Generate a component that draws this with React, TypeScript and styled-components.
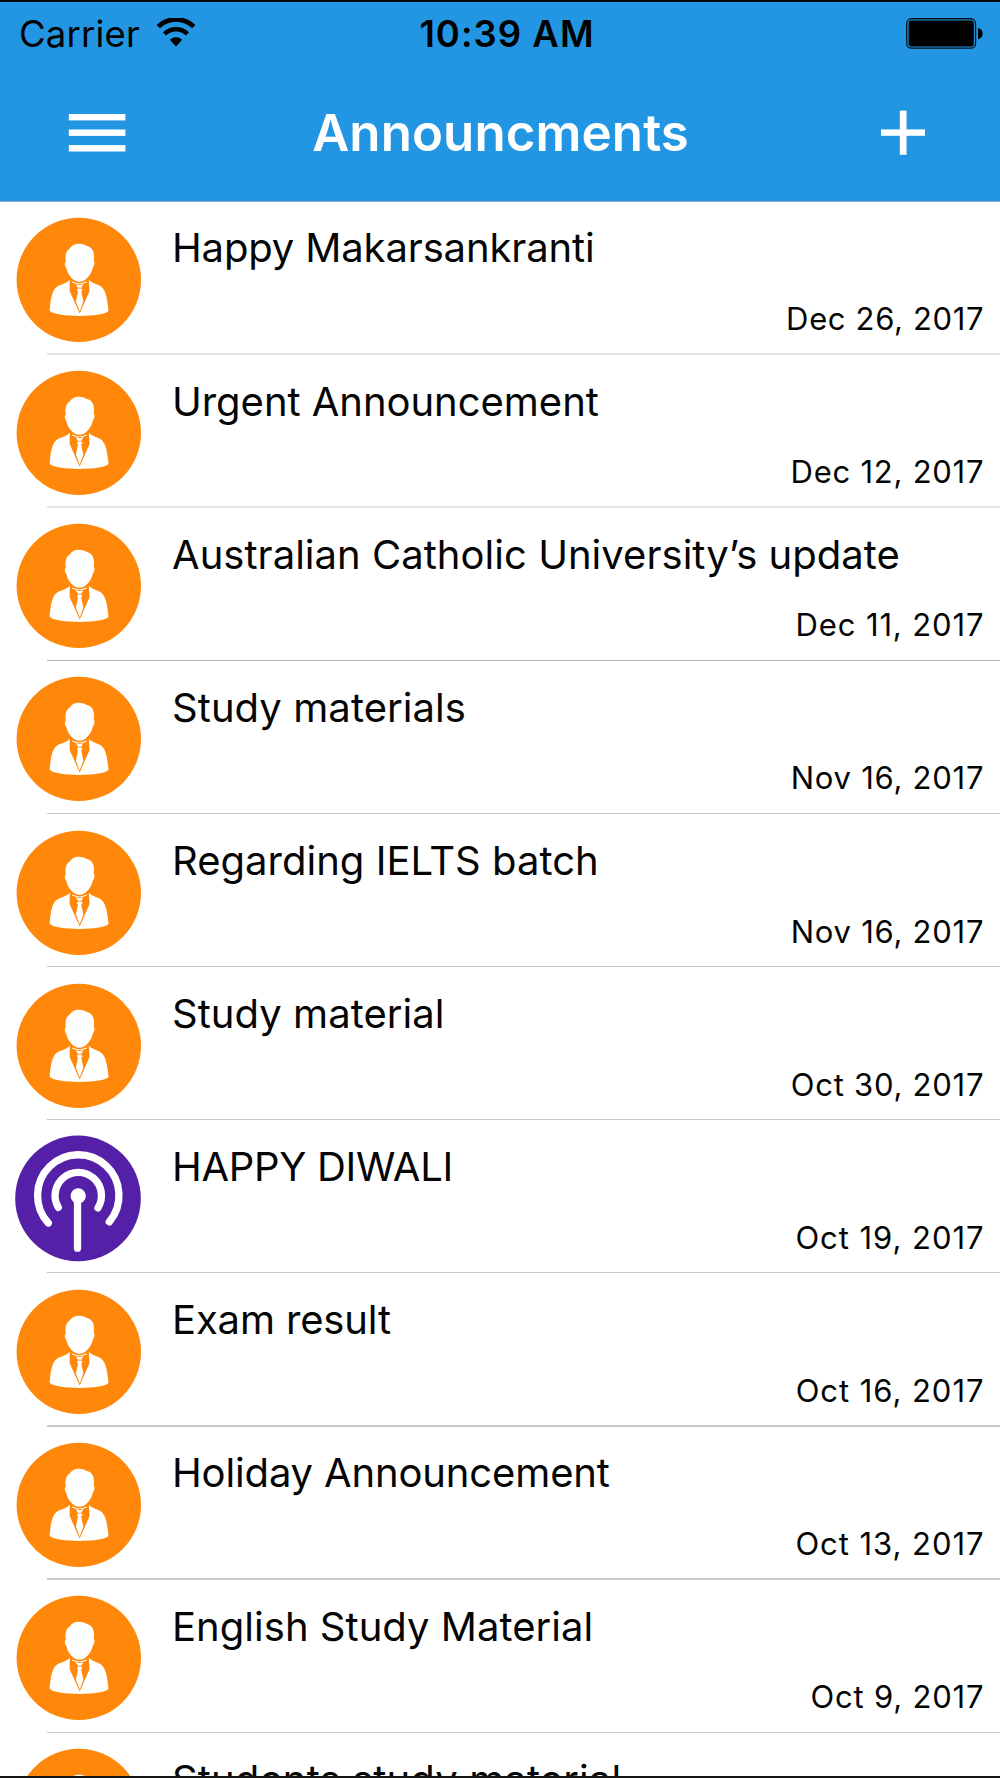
import React from 'react';
import styled, { createGlobalStyle } from 'styled-components';

const Global = createGlobalStyle`
  * { box-sizing: border-box; }
  html, body { margin: 0; padding: 0; background: #fff; }
`;

const Screen = styled.main`
  width: 1000px;
  height: 1778px;
  display: flex;
  flex-direction: column;
  overflow: hidden;
  background: #fff;
  border-top: 2px solid #00060c;
  border-bottom: 2px solid #161616;
  font-family: Inter, 'Liberation Sans', sans-serif;
  color: #050505;
`;

const Header = styled.header`
  flex: none;
  height: 200px;
  background: #2396e3;
  border-bottom: 1px solid #8da5b5;
`;

const StatusBar = styled.div`
  display: grid;
  grid-template-columns: 1fr auto 1fr;
  align-items: center;
  height: 64px;
  padding: 0 17px 0 19px;
  color: #000;
`;

const Carrier = styled.div`
  display: flex;
  align-items: center;
  gap: 16px;
`;

const StatusText = styled.div`
  padding-top: 2px;
`;

const Clock = styled(StatusText)`
  margin-left: 11px;
`;

const WifiBox = styled.div`
  display: flex;
  padding-bottom: 2px;
`;

const BatteryBox = styled.div`
  display: flex;
  justify-content: flex-end;
`;

const NavBar = styled.nav`
  display: grid;
  grid-template-columns: 1fr auto 1fr;
  align-items: center;
  height: 134px;
  padding: 0 74px 0 68px;
`;

const NavButton = styled.button<{ $end?: boolean }>`
  display: flex;
  padding: 0;
  border: 0;
  background: none;
  justify-self: ${p => (p.$end ? 'end' : 'start')};
`;

const NavTitle = styled.h1`
  margin: 0 0 0 7px;
  color: #fff;
`;

const Label = styled.span<{ $size: number; $track?: number; $weight?: number }>`
  display: block;
  font-size: ${p => p.$size}px;
  font-weight: ${p => p.$weight ?? 400};
  letter-spacing: ${p => p.$track ?? 0}px;
  margin-right: ${p => -(p.$track ?? 0)}px;
  line-height: 1.2;
  white-space: nowrap;
`;

const List = styled.ul`
  list-style: none;
  margin: -0.5px 0 0;
  padding: 0;
`;

const Item = styled.li`
  display: flex;
  flex-direction: column;
  height: 153.14px;
`;

const Body = styled.div`
  flex: 1;
  display: flex;
  gap: 30px;
  padding: 14.6px 16.5px 0 15px;
`;

const Details = styled.div`
  flex: 1;
  display: flex;
  flex-direction: column;
  padding-top: 8.3px;
`;

const DateLine = styled.div`
  display: flex;
  justify-content: flex-end;
  margin-top: 27.7px;
`;

const Separator = styled.hr<{ $height: number; $color: string }>`
  flex: none;
  height: ${p => p.$height}px;
  width: 953px;
  margin: 0 0 0 47px;
  border: 0;
  background: ${p => p.$color};
`;

const Wifi = () => (
  <svg width="40" height="30" viewBox="0 0 40 30">
    <g fill="none" stroke="#000" strokeWidth="4.6">
      <path d="M2.3 8.6 A25.5 25.5 0 0 1 37.7 8.6" />
      <path d="M8.5 15.9 A16.5 16.5 0 0 1 31.5 15.9" />
    </g>
    <path d="M13.8 21.7 Q20 17 26.2 21.7 L20 28.4Z" />
  </svg>
);

const Battery = () => (
  <svg width="77" height="32" viewBox="0 0 77 32">
    <rect x="0.75" y="0.75" width="68.8" height="29.4" rx="4.6" fill="none" stroke="#06121c" strokeWidth="1.3" />
    <rect x="2.6" y="2.6" width="65.2" height="25.8" rx="2.6" />
    <path d="M72 10 Q76.6 11.3 76.6 15.7 Q76.6 20 72 21.3Z" />
  </svg>
);

const Menu = () => (
  <svg width="58" height="38" viewBox="0 0 58 38" fill="#fff">
    <rect x="0.8" width="56.6" height="6.4" />
    <rect x="0.8" y="15.5" width="56.6" height="6.4" />
    <rect x="0.8" y="31.1" width="56.6" height="6.4" />
  </svg>
);

const Plus = () => (
  <svg width="46" height="46" viewBox="0 0 46 46" fill="#fff">
    <rect x="1" y="19.4" width="44" height="6.4" />
    <rect x="19.8" y="0.6" width="6.7" height="44.2" />
  </svg>
);

const Person = () => (
  <svg width="127" height="127" viewBox="0 0 127 127">
    <circle cx="63.8" cy="63.9" r="62.2" fill="#ff870a" />
    <path
      d="M50.8 45.5 C49.8 38 51.6 34.4 54.8 32.4 C57 28.8 60.5 27.8 63.5 27.7 C67 27.7 69.5 28.6 71.5 29.8 C77 31 80.2 36 78.7 44.5 C80.2 46.5 79.3 50 77.9 51.5 C76.5 58 71 65.8 64.5 65.8 C58 65.8 52.7 58.5 51.3 52 C49.7 50 49.2 47 50.8 45.5Z"
      fill="#fff"
    />
    <path
      d="M54.8 63.4 L54.6 75 L64.7 97.5 L74.6 75 L73.8 63.6 C76.5 68 84.5 68 88.2 72.8 C92 78 92.6 88 93.6 94.8 C89 101.7 39 101.7 34.6 94.5 C35.3 88 35.8 79 39.5 73 C43 67.8 52 68.3 54.8 63.4Z"
      fill="#fff"
    />
    <g fill="#fff">
      <path d="M57.2 65.6 Q64.5 69.2 71.6 65.6 L71.9 66.4 Q64.5 70 57 66.4Z" />
      <path d="M60.8 68 Q64.5 69.8 68.4 68 L66.4 71.8 H62.8Z" />
      <path d="M63 72.4 H66.4 L67.6 74.2 L66.2 75.6 L68.4 85.5 L64.7 95.6 L60.9 85.5 L63 75.6 L61.8 74.2Z" />
    </g>
  </svg>
);

const Broadcast = () => (
  <svg width="127" height="127" viewBox="0 -0.4 127 127">
    <circle cx="63" cy="63" r="62.8" fill="#5320a7" />
    <g fill="none" stroke="#fff" strokeWidth="7.3" strokeLinecap="round">
      <path d="M33.3 87.6 A40.7 40.7 0 1 1 94.3 86.4" />
      <path d="M43.3 72 A23.2 23.2 0 1 1 83 72.4" />
      <path d="M62.5 62 V112.8" />
    </g>
    <circle cx="63.2" cy="60.4" r="7.6" fill="#fff" />
  </svg>
);

type Announcement = {
  title: string;
  date?: string;
  track: number;
  dateTrack?: number;
  broadcast?: boolean;
  lineHeight?: number;
  lineColor?: string;
};

const announcements: Announcement[] = [
  { title: 'Happy Makarsankranti', date: 'Dec 26, 2017', track: -0.14, dateTrack: 0.65, lineHeight: 2, lineColor: '#e3e3e4' },
  { title: 'Urgent Announcement', date: 'Dec 12, 2017', track: -0.03, dateTrack: 0.75, lineHeight: 2, lineColor: '#e3e3e4' },
  { title: 'Australian Catholic University’s update', date: 'Dec 11, 2017', track: 0.03, dateTrack: 0.87, lineColor: '#b4b4ba' },
  { title: 'Study materials', date: 'Nov 16, 2017', track: 0.07, dateTrack: 0.75 },
  { title: 'Regarding IELTS batch', date: 'Nov 16, 2017', track: 0.02, dateTrack: 0.75 },
  { title: 'Study material', date: 'Oct 30, 2017', track: 0.05, dateTrack: 0.75 },
  { title: 'HAPPY DIWALI', date: 'Oct 19, 2017', track: -0.3, dateTrack: 0.95, broadcast: true },
  { title: 'Exam result', date: 'Oct 16, 2017', track: -0.14, dateTrack: 0.95, lineHeight: 2 },
  { title: 'Holiday Announcement', date: 'Oct 13, 2017', track: -0.14, dateTrack: 0.95, lineHeight: 2 },
  { title: 'English Study Material', date: 'Oct 9, 2017', track: 0.03, dateTrack: 0.8 },
  { title: 'Students study material', track: 0.13 },
];

export default function App() {
  return (
    <Screen>
      <Global />
      <Header>
        <StatusBar>
          <Carrier>
            <StatusText><Label $size={36.5} $track={0.2}>Carrier</Label></StatusText>
            <WifiBox><Wifi /></WifiBox>
          </Carrier>
          <Clock><Label $size={36.5} $weight={600} $track={1}>10:39 AM</Label></Clock>
          <BatteryBox><Battery /></BatteryBox>
        </StatusBar>
        <NavBar>
          <NavButton aria-label="Menu"><Menu /></NavButton>
          <NavTitle><Label $size={51} $weight={600} $track={0.1}>Announcments</Label></NavTitle>
          <NavButton $end aria-label="Add"><Plus /></NavButton>
        </NavBar>
      </Header>
      <List>
        {announcements.map(a => (
          <Item key={a.title}>
            <Body>
              {a.broadcast ? <Broadcast /> : <Person />}
              <Details>
                <Label $size={40} $track={a.track}>{a.title}</Label>
                {a.date && (
                  <DateLine><Label $size={31} $track={a.dateTrack}>{a.date}</Label></DateLine>
                )}
              </Details>
            </Body>
            <Separator $height={a.lineHeight ?? 1} $color={a.lineColor ?? '#c8c7cc'} />
          </Item>
        ))}
      </List>
    </Screen>
  );
}
